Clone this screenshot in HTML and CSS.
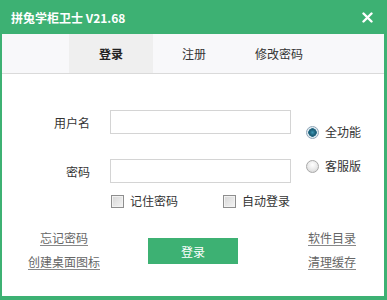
FILE: index.html
```html
<!DOCTYPE html>
<html lang="zh">
<head>
<meta charset="utf-8">
<title>拼兔学柜卫士</title>
<link rel="stylesheet" href="styles.css">
</head>
<body>
<div class="window">
  <div class="titlebar">
    <span class="title">拼兔学柜卫士 V21.68</span>
    <svg class="close" width="11" height="11" viewBox="0 0 11 11"><path d="M1.5 1.5 L9.5 9.5 M9.5 1.5 L1.5 9.5" stroke="#fff" stroke-width="2.4" stroke-linecap="round"/></svg>
  </div>
  <div class="main">
    <div class="tabs">
      <div class="tab tab-login active">登录</div>
      <div class="tab tab-reg">注册</div>
      <div class="tab tab-pwd">修改密码</div>
    </div>
    <div class="form">
      <label class="label">用户名</label>
      <div class="input"></div>
      <div class="radios">
        <div class="radio-item"><span class="radio checked"></span><span>全功能</span></div>
        <div class="radio-item"><span class="radio"></span><span>客服版</span></div>
      </div>
      <label class="label second">密码</label>
      <div class="input second"></div>
      <div class="checks">
        <div class="check-item"><span class="checkbox"></span><span>记住密码</span></div>
        <div class="check-item"><span class="checkbox"></span><span>自动登录</span></div>
      </div>
    </div>
    <div class="bottom">
      <div class="links links-left">
        <a class="link">忘记密码</a>
        <a class="link">创建桌面图标</a>
      </div>
      <div class="btn">登录</div>
      <div class="links links-right">
        <a class="link">软件目录</a>
        <a class="link">清理缓存</a>
      </div>
    </div>
  </div>
</div>
</body>
</html>
```
FILE: styles.css
```css
* { box-sizing: border-box; }
html, body {
  margin: 0;
  padding: 0;
  width: 387px;
  height: 300px;
  overflow: hidden;
  background: #fff;
  font-family: "Noto Sans CJK SC", "Noto Sans", sans-serif;
  font-size: 12px;
  color: #333;
}
.window {
  width: 387px;
  height: 300px;
  display: flex;
  flex-direction: column;
}
.titlebar {
  height: 34px;
  flex: none;
  background: #3db173;
  color: #fff;
  display: flex;
  align-items: center;
  justify-content: space-between;
  padding: 0 14px 0 11px;
}
.title {
  font-size: 12px;
  font-weight: bold;
}
.close { display: block; margin-top: 1px; }
.main {
  flex: 1;
  border: solid #3db173;
  border-width: 0 3px 4px 2px;
  display: flex;
  flex-direction: column;
}
.tabs {
  height: 40px;
  flex: none;
  background: #f8f8fa;
  border-bottom: 1px solid #dadada;
  display: flex;
  padding-left: 67px;
}
.tab {
  display: flex;
  align-items: center;
  justify-content: center;
  color: #333;
}
.tab-login { width: 84px; }
.tab-reg { width: 82px; }
.tab-pwd { width: 88px; }
.tab.active {
  background: #efefef;
  font-weight: bold;
  color: #222;
}
.form {
  margin-top: 36px;
  display: grid;
  grid-template-columns: 88px 181px auto;
  grid-template-rows: 24px auto auto;
  column-gap: 20px;
}
.label {
  display: flex;
  align-items: center;
  justify-content: flex-end;
  color: #333;
}
.input {
  height: 24px;
  border: 1px solid #d4d4d4;
  background: #fff;
}
.second { margin-top: 25px; height: 24px; }
.radios {
  grid-column: 3;
  grid-row: 1 / span 2;
  margin-left: -5px;
  display: flex;
  flex-direction: column;
  justify-content: center;
  gap: 18px;
  padding-top: 5px;
}
.radio-item, .check-item {
  display: flex;
  align-items: center;
  gap: 6px;
  height: 16px;
  line-height: 16px;
}
.radio {
  width: 13px;
  height: 13px;
  border-radius: 50%;
  border: 1px solid #a9a9a9;
  background: radial-gradient(circle at 50% 35%, #ffffff 0%, #e8e8e8 55%, #cfcfcf 100%);
  flex: none;
}
.radio.checked {
  border-color: #8fa6b8;
  background: radial-gradient(circle, #3c96b4 0, #1c5f78 3px, #2a6f8a 4px, #dfe9f0 4.5px, #eef3f7 100%);
}
.checks {
  grid-column: 2;
  grid-row: 3;
  margin-top: 10px;
  display: flex;
  justify-content: space-between;
  align-items: center;
  padding: 0 1px;
}
.checkbox {
  width: 13px;
  height: 13px;
  border: 1px solid #8e8e8e;
  background: linear-gradient(135deg, #d6d6d6, #f4f4f4);
  box-shadow: inset 0 0 0 1px #f2f2f2;
  flex: none;
}
.bottom {
  margin-top: 17px;
  display: grid;
  grid-template-columns: 124px 90px auto;
  column-gap: 22px;
}
.links {
  display: flex;
  flex-direction: column;
}
.links-left { align-items: center; }
.links-right { margin-left: 48px; align-items: flex-start; }
.link {
  line-height: 24px;
  color: #666;
  text-decoration: underline;
  text-decoration-color: #888;
  text-underline-offset: 2px;
}
.btn {
  margin-top: 12px;
  height: 26px;
  background: #3db173;
  color: #fff;
  display: flex;
  align-items: center;
  justify-content: center;
}
```
